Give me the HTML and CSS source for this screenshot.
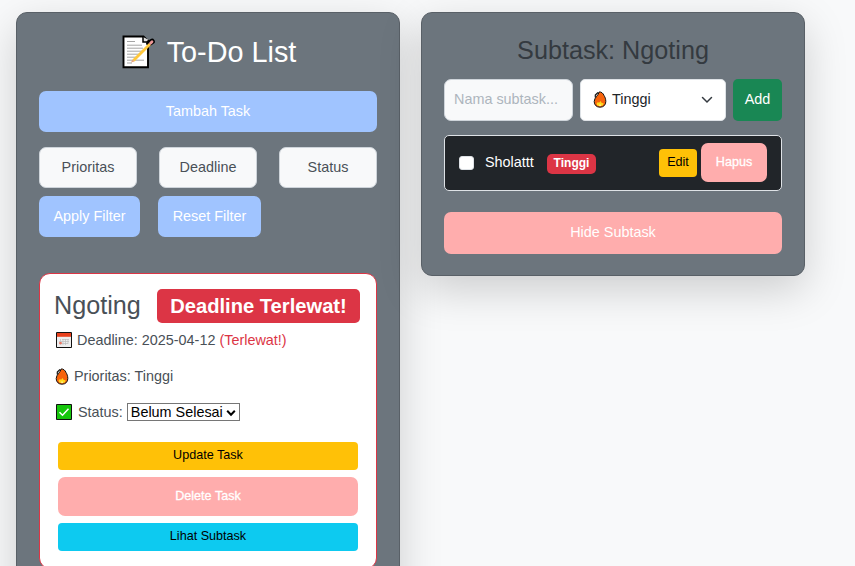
FILE: index.html
```html
<!DOCTYPE html>
<html lang="id">
<head>
<meta charset="utf-8">
<title>To-Do List</title>
<link rel="stylesheet" href="styles.css">
</head>
<body>
<svg width="0" height="0" class="defs">
  <symbol id="fire" viewBox="0 0 14 17">
    <path d="M6 1C6 4 1.200 6.500 1.200 10.500C1.200 14 3.500 16.200 7 16.200S12.800 14 12.800 10.500C12.800 8 12 6 11 4.500C10.500 2.500 8 .5 6 1Z" fill="#f7630c" stroke="#111" stroke-width="1"/>
    <path d="M2.300 6.500V4L5 1.500" fill="none" stroke="#111" stroke-width="1.200"/>
    <path d="M7.300 10C7 11 6.300 12 5.500 11.500C4.500 11 3.700 12 3.700 13C4 15.700 10 15.700 10.400 13C10.700 12 10 11.500 9.300 12.300C8.500 12 8.500 11 7.300 10Z" fill="#ffd91c"/>
    <path d="M7 13C6 14 6 15 7 15.200C8.500 15 8 14 7 13Z" fill="#fff6a0"/>
  </symbol>
</svg>
<main class="page">
  <section class="panel panel-main">
    <h2 class="title">
      <svg class="memo" viewBox="0 0 34 34"><path d="M1.500 1.500H21.500L26 6V32.200H1.500Z" fill="#fff" stroke="#000" stroke-width="1.900"/><path d="M21 2V7H25L27 5" fill="#ddd" stroke="#000" stroke-width="1.500"/><path d="M5 6.500H13M5 10.200H20M5 13.200H21M5 16.200H20M5 19.200H17M5 22.200H14M5 25.200H22M5 28H10" stroke="#a5a5a5" stroke-width="1"/><path d="M27 8.500L30 6.500" stroke="#000" stroke-width="5.600" stroke-linecap="round"/><path d="M11.500 25.500L28 9" stroke="#ffc83d" stroke-width="2.800"/><path d="M28.500 8.300L30 6.800" stroke="#ef9898" stroke-width="2.800" stroke-linecap="round"/><path d="M9 27.500L10.500 24.500L12.500 26.500Z" fill="#e6a27c"/></svg>
      <span>To-Do List</span>
    </h2>
    <button class="btn btn-blue btn-add-task">Tambah Task</button>
    <div class="filters">
      <div class="filter">Prioritas</div><div class="filter">Deadline</div><div class="filter">Status</div>
    </div>
    <div class="filter-actions">
      <button class="btn btn-blue apply">Apply Filter</button><button class="btn btn-blue reset">Reset Filter</button>
    </div>
    <article class="task">
      <h5 class="task-title"><span class="task-name">Ngoting</span><span class="overdue">Deadline Terlewat!</span></h5>
      <p class="line"><svg class="cal" viewBox="0 0 16 16"><path d="M.5.500H15.500V15.500H.5Z" fill="#eee" stroke="#111" stroke-width="1"/><path d="M1 1H15V4.800H1Z" fill="#e8401c"/><path d="M6 7.500H13M3 9.500H13M3 11.500H12M4.500 7V13M7 7V13M9.500 7V13M12 7V12" stroke="#bbb" stroke-width=".7"/><path d="M3.300 10H5.700V12.200H3.300Z" fill="#ef7460"/></svg><span>Deadline: 2025-04-12 <span class="late">(Terlewat!)</span></span></p>
      <p class="line"><svg class="fire"><use href="#fire"/></svg><span>Prioritas: Tinggi</span></p>
      <p class="line"><svg class="check" viewBox="0 0 16 16"><path d="M.5.500H15.500V15.500H.5Z" fill="#16c60c" stroke="#111" stroke-width="1"/><path d="M3.500 8.200L6.500 11.200L12.500 4.800" fill="none" stroke="#fff" stroke-width="1.500"/></svg><span>Status:</span>
        <span class="select">Belum Selesai<svg viewBox="0 0 10 8"><path d="M1.200 1.800L5 5.700L8.800 1.800" fill="none" stroke="#000" stroke-width="2"/></svg></span></p>
      <div class="actions">
        <button class="btn sm yellow">Update Task</button>
        <button class="btn sm pink tall">Delete Task</button>
        <button class="btn sm cyan">Lihat Subtask</button>
      </div>
    </article>
  </section>
  <section class="panel panel-sub">
    <h4 class="sub-title">Subtask: Ngoting</h4>
    <div class="form">
      <div class="input">Nama subtask...</div>
      <div class="choice"><svg class="fire"><use href="#fire"/></svg><span>Tinggi</span><svg class="chev" viewBox="0 0 12 8"><path d="M1.500 1.500L6 6L10.500 1.500" fill="none" stroke="#343a40" stroke-width="1.500" stroke-linecap="round"/></svg></div>
      <button class="btn green">Add</button>
    </div>
    <div class="item">
      <span class="box"></span><span class="item-name">Sholattt</span><span class="badge">Tinggi</span>
      <button class="btn sm yellow edit">Edit</button><button class="btn sm pink hapus">Hapus</button>
    </div>
    <button class="btn pink hide">Hide Subtask</button>
  </section>
</main>
</body>
</html>
```
FILE: styles.css
```css
* { box-sizing: border-box; }
body { margin: 0; background: #f8f9fa; font: 14.4px/21.6px "Liberation Sans", Arial, sans-serif; color: #495057; }
.defs { display: block; }
h2, h4, h5, p { margin: 0; font-weight: 400; }
svg { display: block; flex: none; }
.page { display: flex; align-items: flex-start; gap: 21px; height: 566px; padding: 12px 0 0 16px; overflow: hidden; }
.panel { width: 384px; flex: none; padding: 22px; background: #6c757d; border: 1px solid #596067; border-radius: 11px; box-shadow: 0 14px 43px rgba(0,0,0,.175); }
.panel-main { height: 590px; }
.panel-sub { height: 264px; }
.title { display: flex; justify-content: center; gap: 11px; height: 34px; margin-bottom: 22px; padding-left: 2px; color: #fff; font-size: 28.8px; line-height: 34px; }
.memo { width: 34px; height: 34px; }
.btn { display: block; border: 0; padding: 0; border-radius: 7px; color: #fff; font: 14.4px/20px "Liberation Sans", Arial, sans-serif; text-align: center; height: 41px; white-space: nowrap; }
.btn-blue { padding-bottom: 2px; background: #a0c4ff; }
.btn-add-task { width: 338px; }
.filters { display: flex; gap: 22px; margin-top: 15px; }
.filter { flex: 1; height: 41px; border: 1px solid #ced4da; border-radius: 7px; background: #f8f9fa; text-align: center; line-height: 39px; }
.filter-actions { display: flex; gap: 18px; margin-top: 8px; }
.apply { width: 101px; }
.reset { width: 103px; }
.task { width: 338px; height: 296px; margin-top: 36px; padding: 15px 14px 0; background: #fff; border: 1px solid #dc3545; border-radius: 11px; }
.task-title { display: flex; height: 34px; line-height: 32px; }
.task-name { width: 103px; font-size: 25.2px; }
.overdue { width: 203px; height: 34px; border-radius: 5px; background: #dc3545; color: #fff; font-size: 20.16px; font-weight: 700; text-align: center; line-height: 34px; }
.line { display: flex; align-items: center; height: 22px; margin-bottom: 14px; padding-left: 1px; white-space: nowrap; }
.task-title + .line { margin-top: 7px; }
.cal, .check { width: 16px; height: 16px; margin: 0 6px 2px 1px; }
.cal { margin-right: 5px; }
.fire { width: 14px; height: 17px; margin-bottom: 2px; }
.line .fire { margin-right: 5px; }
.late { color: #dc3545; }
.select { display: flex; align-items: center; justify-content: space-between; width: 113px; height: 18px; margin: 0 0 2px 4px; padding: 1px 3px 0; border: 1px solid #767676; color: #000; }
.select svg { width: 10px; height: 8px; }
.actions { display: flex; flex-direction: column; gap: 7px; width: 300px; margin: 18px 0 0 4px; }
.sm { height: 28px; padding-bottom: 2px; border-radius: 4px; font-size: 12.6px; }
.yellow { background: #ffc107; color: #000; }
.cyan { background: #0dcaf0; color: #000; }
.pink { background: #ffadad; }
.tall { height: 39px; border-radius: 7px; -webkit-text-stroke: .3px #fff; }
.sub-title { height: 30px; margin-bottom: 14px; color: #343a40; font-size: 25.2px; line-height: 31px; text-align: center; }
.form { display: flex; gap: 7px; height: 42px; }
.input, .choice { border: 1px solid #ced4da; border-radius: 7px; line-height: 39px; height: 42px; }
.input { width: 129px; padding-left: 9px; background: #f8f9fa; color: #adb5bd; white-space: nowrap; }
.choice { display: flex; align-items: center; width: 146px; padding: 0 12px; border-radius: 5px; background: #fff; border-color: #dee2e6; color: #212529; }
.choice span { margin: 0 auto 1px 5px; }
.chev { width: 12px; height: 8px; }
.green { width: 49px; height: 42px; padding-bottom: 2px; border-radius: 5px; background: #198754; }
.item { display: flex; align-items: center; height: 56px; margin-top: 14px; padding: 0 14px; border: 1px solid #dee2e6; border-radius: 5px; background: #212529; color: #fff; }
.box { width: 15px; height: 14px; border: 1px solid #dee2e6; border-radius: 3px; background: #fff; }
.item-name { width: 62px; margin-left: 11px; }
.badge { width: 49px; height: 20px; margin-top: 2px; border-radius: 5px; background: #dc3545; font-size: 12px; font-weight: 700; line-height: 19px; text-align: center; }
.edit { width: 38px; margin-left: auto; }
.hapus { width: 66px; height: 39px; margin: 0 0 1px 4px; border-radius: 7px; -webkit-text-stroke: .3px #fff; }
.hide { width: 338px; height: 42px; margin-top: 21px; padding-bottom: 2px; }
```
